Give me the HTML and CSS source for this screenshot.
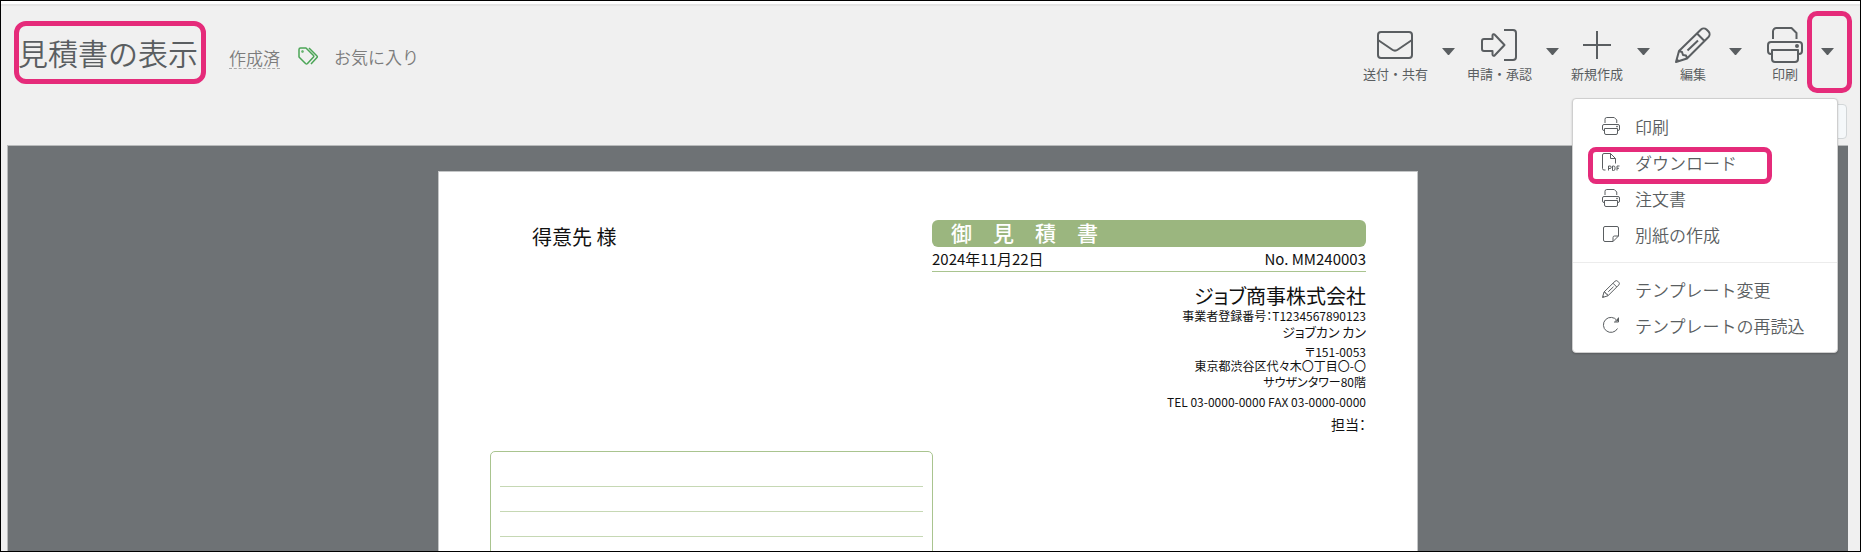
FILE: index.html
```html
<!DOCTYPE html>
<html lang="ja">
<head>
  <meta charset="UTF-8">
  <meta name="viewport" content="width=device-width, initial-scale=1.0">
  <title>見積書の表示</title>
  <link rel="stylesheet" href="styles.css">
</head>
<body>
  <!-- shared icons -->
  <svg class="sprite" aria-hidden="true">
    <symbol id="i-printer" viewBox="0 0 36 36">
      <path d="M6 12V4.500a3.500 3.500 0 0 1 3.500-3.500h15l5 5V12M5 27H4a3 3 0 0 1-3-3v-6a3 3 0 0 1 3-3h28a3 3 0 0 1 3 3v6a3 3 0 0 1-3 3h-1M5 23h26v9a3 3 0 0 1-3 3H8a3 3 0 0 1-3-3z"/>
      <circle cx="30" cy="19" r="1"/>
    </symbol>
    <symbol id="i-pencil" viewBox="0 0 36 36">
      <path d="M1 35l3-11L26 2.500a4 4 0 0 1 5.500 0l2 2a4 4 0 0 1 0 5.500L12 31.500zM4 24l3 1 1 3 3 .5 1 3M22 6.500l7.500 7.500M12.500 23.500l10.500-10M1.500 32.500l2.500 1.500"/>
    </symbol>
  </svg>

  <header class="header">
    <div class="header-row">
      <div class="heading">
        <h1 class="title">見積書の表示</h1>
        <a class="status" href="#">作成済</a>
        <a class="favorite" href="#">
          <svg class="tag" viewBox="0 0 21 18">
            <path d="M1 2.500A1.500 1.500 0 0 1 2.500 1H8l7.500 7.500a1 1 0 0 1 0 1.500L9.500 16.500a1.500 1.500 0 0 1-2 0L1 10zM11 1l8 8a1 1 0 0 1 0 1.500L13 17"/>
            <circle cx="4.500" cy="4.500" r=".5"/>
          </svg>
          お気に入り
        </a>
      </div>

      <nav class="toolbar">
        <div class="tool-group">
          <button class="tool">
            <svg viewBox="0 0 36 36"><rect x="1" y="5" width="34" height="26" rx="3"/><path d="M1 13l14 9.500a5 5 0 0 0 6 0L35 13"/></svg>
            送付・共有
          </button>
          <button class="caret" aria-label="送付・共有メニュー"></button>
        </div>
        <div class="tool-group">
          <button class="tool">
            <svg viewBox="0 0 36 36"><path d="M23 3h9a3 3 0 0 1 3 3v24a3 3 0 0 1-3 3h-9M3 12h8.500V8.500a1.300 1.300 0 0 1 2.300-.8L23.500 18 13.800 28.300a1.300 1.300 0 0 1-2.300-.8V24H3a2 2 0 0 1-2-2v-8a2 2 0 0 1 2-2z"/></svg>
            申請・承認
          </button>
          <button class="caret" aria-label="申請・承認メニュー"></button>
        </div>
        <div class="tool-group">
          <button class="tool">
            <svg viewBox="0 0 36 36"><path d="M18 4v28M4 18h28"/></svg>
            新規作成
          </button>
          <button class="caret" aria-label="新規作成メニュー"></button>
        </div>
        <div class="tool-group short">
          <button class="tool">
            <svg><use href="#i-pencil"/></svg>
            編集
          </button>
          <button class="caret" aria-label="編集メニュー"></button>
        </div>
        <div class="tool-group short">
          <button class="tool">
            <svg><use href="#i-printer"/></svg>
            印刷
          </button>
          <button class="caret marked" aria-label="印刷メニュー"></button>

          <div class="menu">
            <button class="menu-item"><svg><use href="#i-printer"/></svg>印刷</button>
            <button class="menu-item marked">
              <svg viewBox="0 0 36 36"><path d="M7 34H4a3 3 0 0 1-3-3V4a3 3 0 0 1 3-3h13l10 10v10M17 1v10h10M13 35V26h3a2 2 0 0 1 0 5h-3M21 26v9h2a3 3 0 0 0 3-3v-3a3 3 0 0 0-3-3zM30 35v-9h5M30 30.500h4"/></svg>ダウンロード
            </button>
            <button class="menu-item"><svg><use href="#i-printer"/></svg>注文書</button>
            <button class="menu-item">
              <svg viewBox="0 0 36 36"><path d="M22 33H6a3 3 0 0 1-3-3V6a3 3 0 0 1 3-3h24a3 3 0 0 1 3 3v16L22 33v-8a3 3 0 0 1 3-3h8"/></svg>別紙の作成
            </button>
            <hr class="menu-line">
            <button class="menu-item"><svg><use href="#i-pencil"/></svg>テンプレート変更</button>
            <button class="menu-item">
              <svg viewBox="0 0 36 36"><path d="M31 25a15 15 0 1 1-1-16M33 3v9h-9M31 5v5h-5"/></svg>テンプレートの再読込
            </button>
          </div>
        </div>
      </nav>
    </div>
    <div class="sub-row">
      <button class="option" aria-label="表示設定"></button>
    </div>
  </header>

  <main class="stage">
    <article class="paper">
      <div class="paper-top">
        <p class="client">得意先 様</p>
        <section class="issuer">
          <h2 class="doc-title">御　見　積　書</h2>
          <div class="doc-info">
            <span>2024年11月22日</span>
            <span>No. MM240003</span>
          </div>
          <div class="company">
            <p class="company-name">ジョブ商事株式会社</p>
            <p>事業者登録番号：T1234567890123</p>
            <p class="kana">ジョブカン カン</p>
            <p class="spaced">〒151-0053</p>
            <p>東京都渋谷区代々木〇丁目〇-〇</p>
            <p class="tall">サウザンタワー80階</p>
            <p class="spaced">TEL 03-0000-0000 FAX 03-0000-0000</p>
            <p class="staff">担当：</p>
          </div>
        </section>
      </div>
      <div class="notes">
        <div class="note-row"></div>
        <div class="note-row"></div>
        <div class="note-row"></div>
        <div class="note-row"></div>
      </div>
    </article>
  </main>
</body>
</html>
```
FILE: styles.css
```css
* {
  box-sizing: border-box;
}

body {
  display: flex;
  flex-direction: column;
  height: 100vh;
  margin: 0;
  border: 1px solid #000;
  overflow: hidden;
  background: #f0f0f0;
  color: #5a5e61;
  font-family: "Noto Sans CJK JP", sans-serif;
}

h1, h2, p {
  margin: 0;
  font-weight: 400;
}

button {
  padding: 0;
  border: 0;
  background: none;
  color: inherit;
  font-family: inherit;
  cursor: pointer;
}

a {
  color: #7c7c7c;
  text-decoration: none;
}

svg {
  fill: none;
  stroke: currentColor;
  stroke-width: 2;
  stroke-linejoin: round;
}

.sprite {
  position: absolute;
  width: 0;
  height: 0;
}

/* header */

.header {
  flex: none;
  border-top: 3px solid #fff;
  box-shadow: inset 0 2px 1px #e4e4e4;
}

.header-row {
  display: flex;
  justify-content: space-between;
  padding: 23px 26px 0 17px;
}

.heading {
  display: flex;
  align-items: baseline;
  font-size: 17px;
  font-weight: 350;
}

.title {
  position: relative;
  margin-right: 31px;
  font-size: 30px;
  font-weight: 350;
  line-height: 50px;
}

.title::after,
.marked::after {
  content: "";
  position: absolute;
  border: 5px solid #e52b7a;
  border-radius: 10px;
  pointer-events: none;
}

.title::after {
  inset: -6px -8px -7px -4px;
  border-radius: 12px;
}

.status {
  margin-right: 18px;
  border-bottom: 1px dashed #a8a8a8;
  line-height: 20px;
}

.favorite {
  display: flex;
  align-items: center;
  gap: 15px;
}

.tag {
  width: 21px;
  height: 18px;
  color: #4ba556;
  stroke-width: 1.5;
}

/* toolbar */

.toolbar {
  display: flex;
  gap: 10px;
}

.tool-group {
  position: relative;
  display: flex;
  align-items: flex-start;
  gap: 12px;
}

.tool-group.short {
  padding-left: 9px;
}

.tool {
  display: flex;
  flex-direction: column;
  align-items: center;
  gap: 2px;
  min-width: 48px;
  padding: 0 2px;
  font-size: 13px;
  line-height: 18px;
}

.tool svg {
  width: 36px;
  height: 36px;
}

.caret {
  position: relative;
  width: 13px;
  height: 48px;
}

.caret::before {
  content: "";
  display: block;
  border: solid transparent;
  border-width: 7px 6px 0;
  border-top-color: #5a5e61;
}

.caret.marked::after {
  inset: -16px -18px -18px -14px;
}

/* drop-down menu */

.menu {
  position: absolute;
  top: 71px;
  right: -4px;
  z-index: 2;
  width: 266px;
  padding: 9px 0;
  border: 1px solid #cfcfcf;
  border-radius: 4px;
  background: #fff;
  box-shadow: 0 1px 2px rgba(0, 0, 0, 0.2);
}

.menu-item {
  position: relative;
  display: flex;
  align-items: center;
  gap: 15px;
  width: 100%;
  height: 36px;
  padding: 0 29px;
  font-size: 17px;
  font-weight: 350;
  white-space: nowrap;
}

.menu-item svg {
  flex: none;
  width: 18px;
  height: 18px;
}

.menu-item.marked::after {
  inset: 3px 65px -4px 15px;
  border-radius: 8px;
}

.menu-line {
  margin: 10px 0 8px;
  border: 0;
  border-top: 1px solid #ececec;
}

.sub-row {
  display: flex;
  justify-content: flex-end;
  padding: 21px 13px 6px;
}

.option {
  width: 120px;
  height: 35px;
  border: 1px solid #d2d6d8;
  border-radius: 4px;
  background: #f5f8fa;
}

/* preview */

.stage {
  flex: 1;
  min-height: 0;
  margin: 0 12px 0 6px;
  padding-top: 25px;
  border: solid #b9bbbc;
  border-width: 1px 0 0 1px;
  background: #6e7275;
}

.paper {
  width: 100%;
  max-width: 980px;
  height: 100%;
  margin: 0 auto;
  padding: 48px 51px 0;
  border: 1px solid #c4c6c7;
  border-bottom: 0;
  background: #fff;
  color: #111;
  overflow: hidden;
  font-feature-settings: "palt";
}

.paper-top {
  display: flex;
  justify-content: space-between;
  min-height: 231px;
}

.client {
  padding: 3px 0 0 42px;
  font-size: 20px;
  line-height: 28px;
}

.issuer {
  width: 434px;
}

.doc-title {
  padding: 0 0 2px 19px;
  border-radius: 6px;
  background: #9bb67f;
  color: #fff;
  font-size: 21px;
  font-weight: 500;
  line-height: 25px;
  font-feature-settings: normal;
}

.doc-info {
  display: flex;
  justify-content: space-between;
  border-bottom: 1px solid #a9c48f;
  font-size: 15px;
  line-height: 24px;
}

.company {
  padding-top: 12px;
  font-size: 12px;
  line-height: 14px;
  text-align: right;
}

.company-name {
  margin-bottom: 1px;
  font-size: 20px;
  line-height: 24px;
}

.kana {
  font-size: 13px;
  line-height: 18px;
}

.tall {
  line-height: 18px;
}

.spaced {
  margin-top: 4px;
}

.staff {
  margin-top: 6px;
  font-size: 14px;
  line-height: 18px;
}

.notes {
  width: 443px;
  padding: 10px 9px;
  border: 1px solid #a9c48f;
  border-radius: 5px;
}

.note-row {
  height: 25px;
  border-bottom: 1px solid #c6d8b4;
}
```
